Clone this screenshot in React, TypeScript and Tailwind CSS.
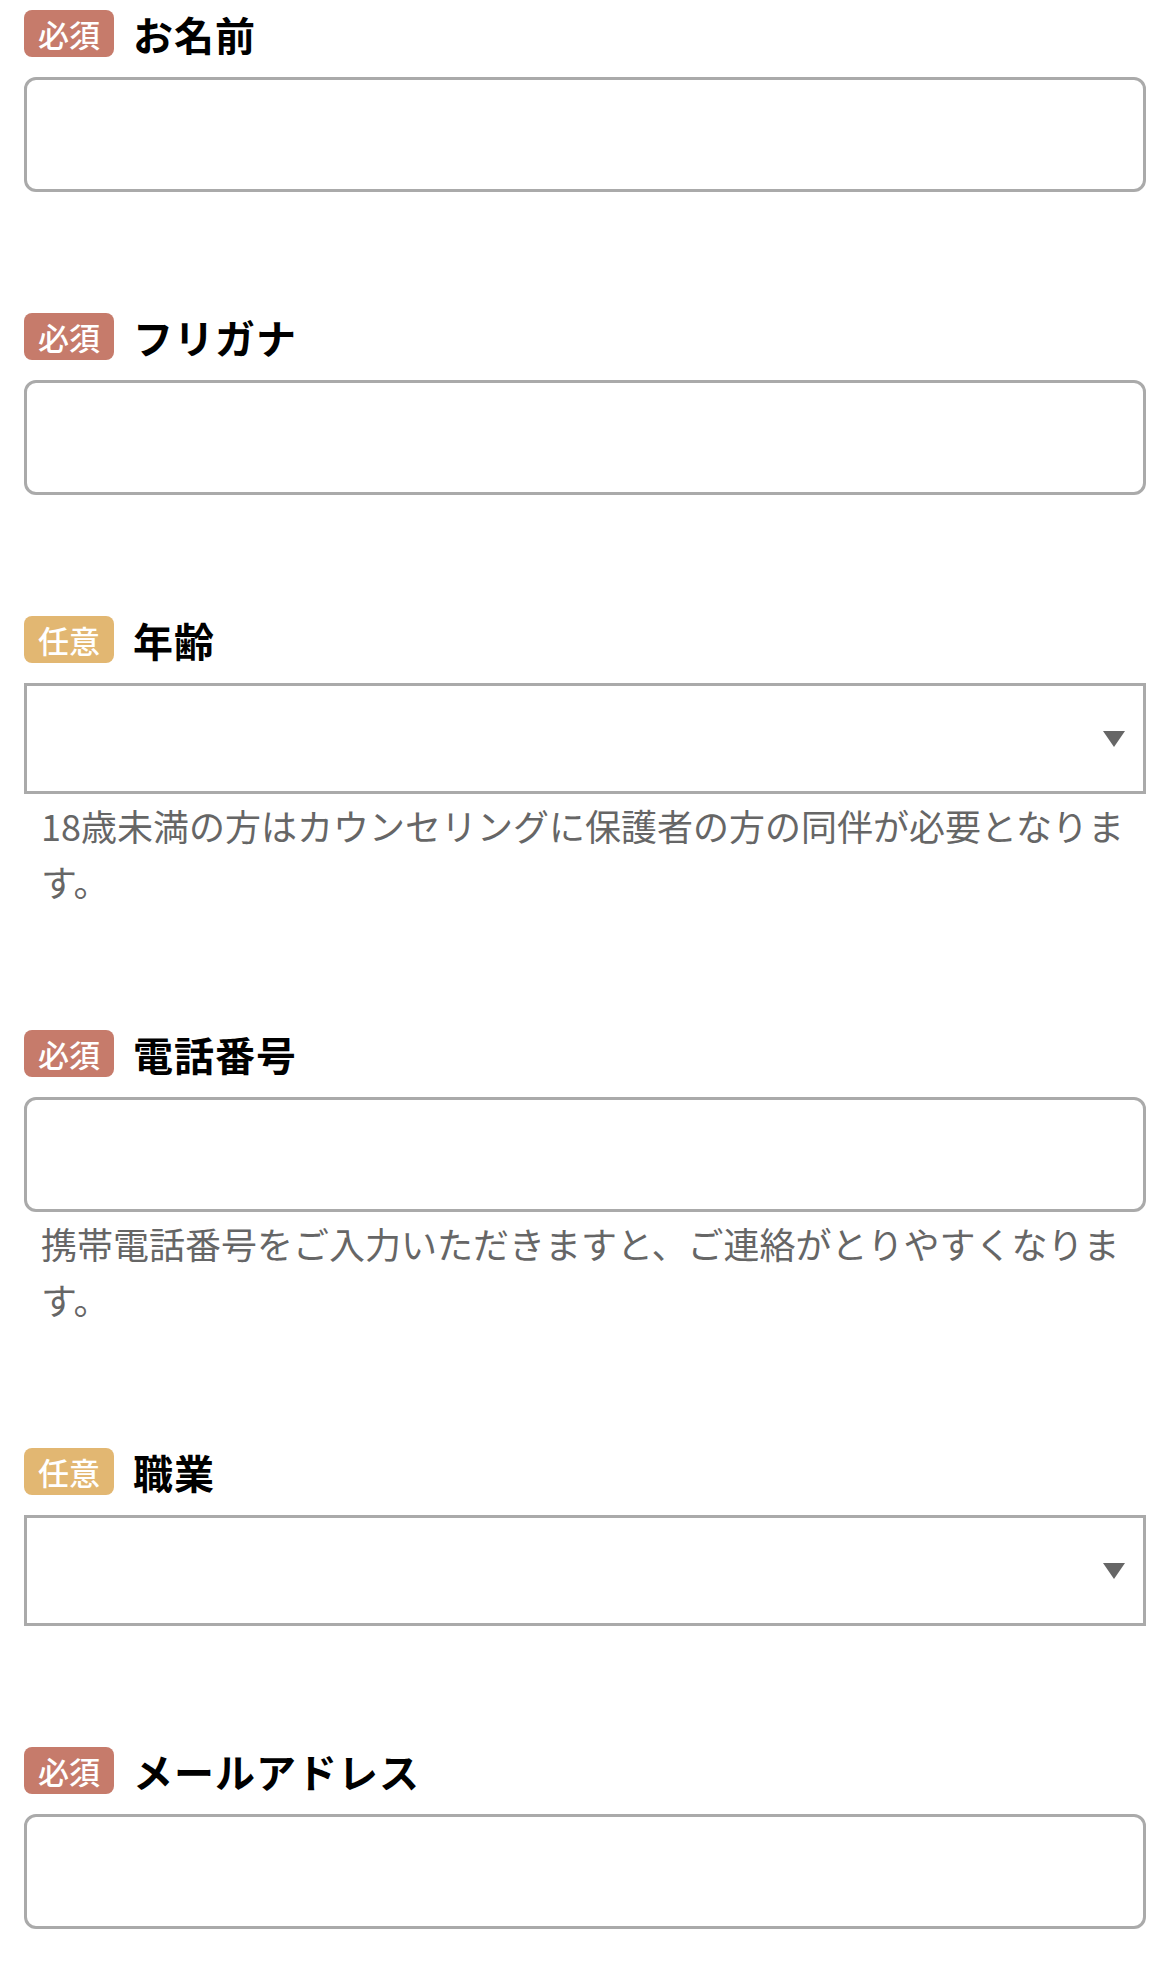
import React from 'react';

type Field = {
  label: string;
  required: boolean;
  kind: 'input' | 'select';
  note?: string;
};

const fields: Field[] = [
  { label: 'お名前', required: true, kind: 'input' },
  { label: 'フリガナ', required: true, kind: 'input' },
  {
    label: '年齢',
    required: false,
    kind: 'select',
    note: '18歳未満の方はカウンセリングに保護者の方の同伴が必要となります。',
  },
  {
    label: '電話番号',
    required: true,
    kind: 'input',
    note: '携帯電話番号をご入力いただきますと、ご連絡がとりやすくなります。',
  },
  { label: '職業', required: false, kind: 'select' },
  { label: 'メールアドレス', required: true, kind: 'input' },
];

const Badge = ({ required }: { required: boolean }) => (
  <span
    className={`flex h-[47px] w-[90px] shrink-0 items-center justify-center rounded-[8px] text-[31px] font-medium leading-none text-white ${
      required ? 'bg-[#c67b6b]' : 'bg-[#e2b772]'
    }`}
  >
    {required ? '必須' : '任意'}
  </span>
);

const SelectBox = () => (
  <div className="mt-[20px] flex h-[111px] items-center justify-end border-[3px] border-[#aaaaaa] bg-white pr-[18px]">
    <svg width="22" height="16" viewBox="0 0 22 16">
      <polygon points="0,0 22,0 11,16" fill="#666666" />
    </svg>
  </div>
);

const InputBox = () => (
  <input
    type="text"
    className="mt-[20px] block h-[115px] w-full rounded-[12px] border-[3px] border-[#aaaaaa] bg-white px-4 text-[36px] outline-none"
  />
);

export default function App() {
  return (
    <div
      className="min-h-[1976px] w-full bg-white px-[24px] pt-[10px] text-black"
      style={{ fontFamily: '"Noto Sans CJK JP", "Noto Sans", sans-serif' }}
    >
      {fields.map((f, i) => (
        <section key={i} className="mb-[121px]">
          <div className="flex items-center gap-[19px]">
            <Badge required={f.required} />
            <h2 className="text-[40px] font-bold leading-none tracking-[1px]">{f.label}</h2>
          </div>
          {f.kind === 'input' ? <InputBox /> : <SelectBox />}
          {f.note && (
            <p className="mt-[3px] pl-[17px] pr-[14px] text-[36px] leading-[56px] text-[#666666]">
              {f.note}
            </p>
          )}
        </section>
      ))}
    </div>
  );
}
